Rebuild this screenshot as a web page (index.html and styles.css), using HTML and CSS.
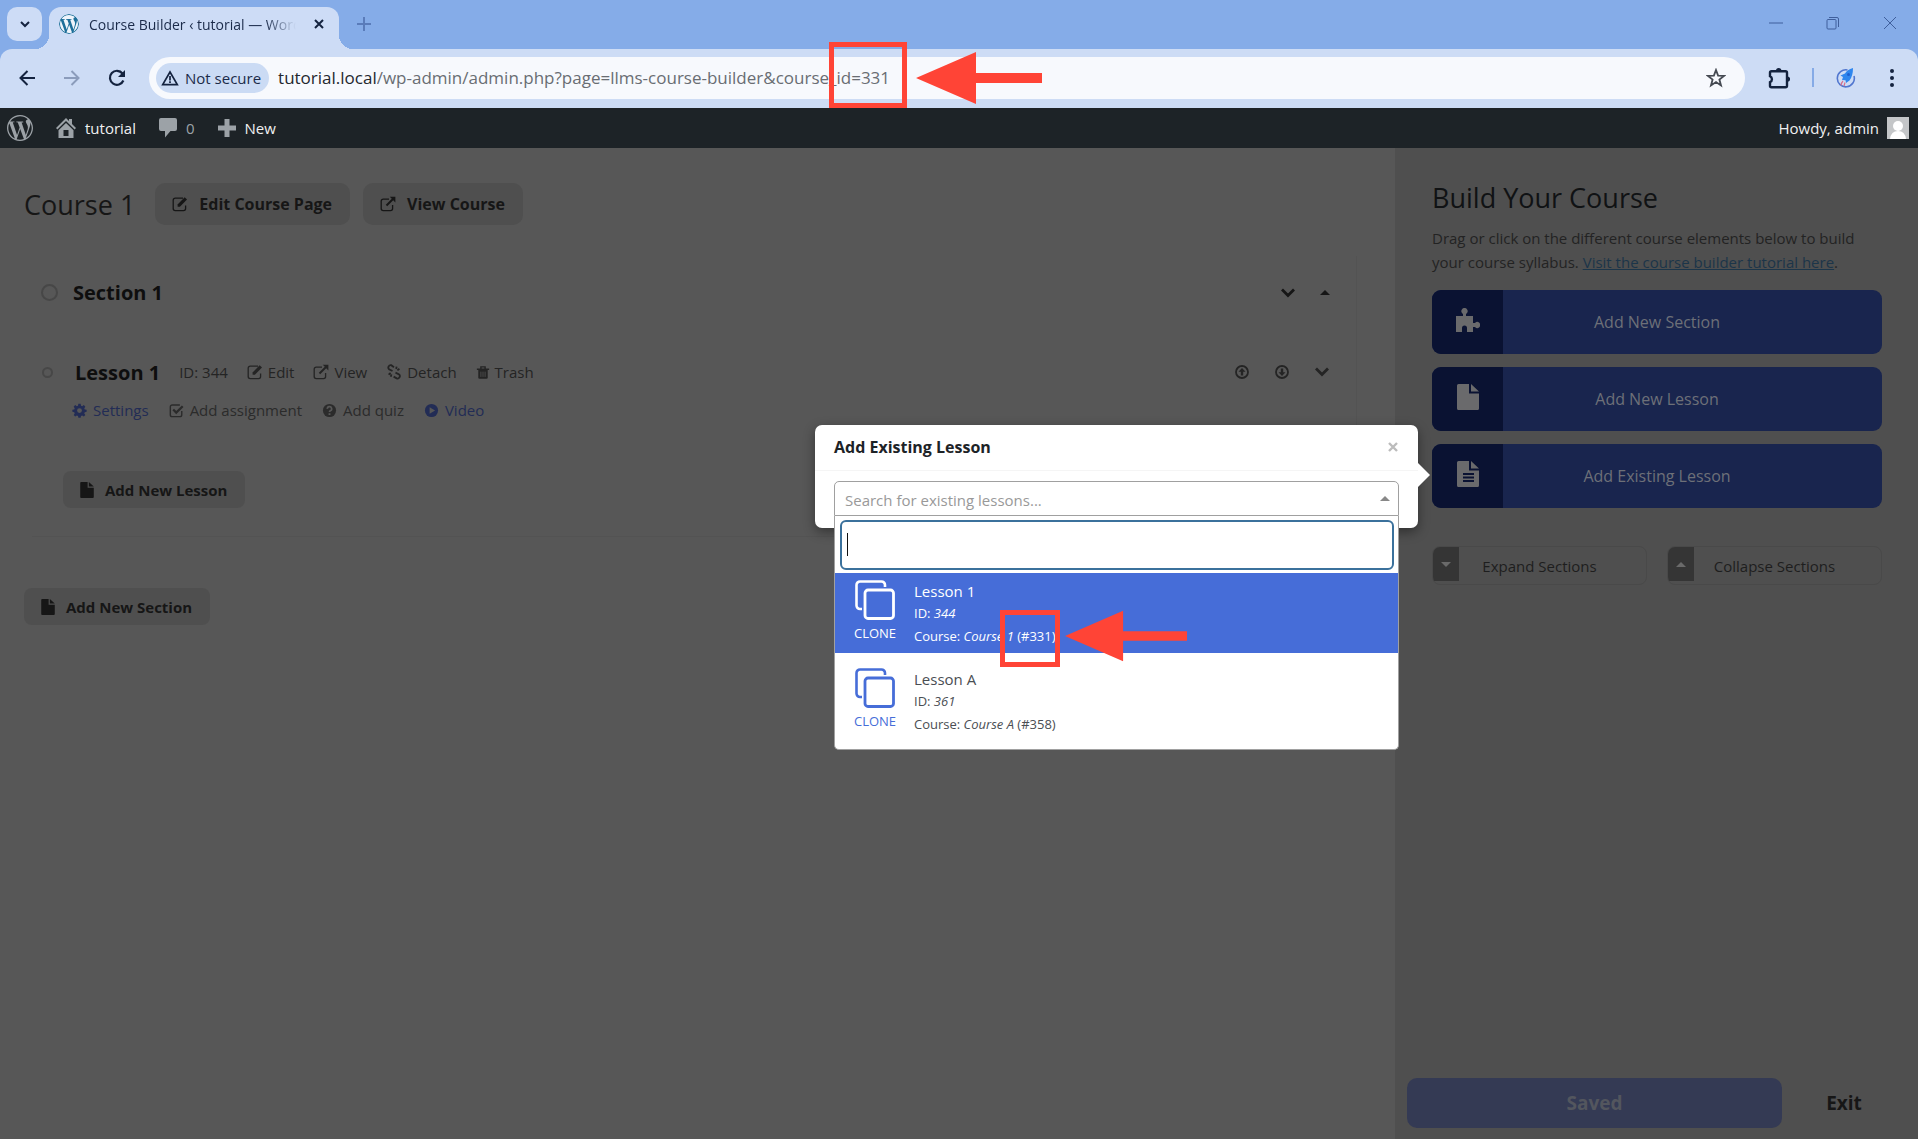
FILE: index.html
```
<!DOCTYPE html>
<html lang="en">
<head>
  <meta charset="UTF-8">
  <meta name="viewport" content="width=device-width, initial-scale=1.0">
  <title>Course Builder ‹ tutorial — WordPress</title>
  <link rel="stylesheet" href="styles.css">
</head>
<body>
  <!-- shared icons -->
  <svg class="sprite" aria-hidden="true">
    <symbol id="i-wp" viewBox="0 0 24 24"><path fill="currentColor" d="M21.469 6.825c.84 1.537 1.318 3.3 1.318 5.175 0 3.979-2.156 7.456-5.363 9.325l3.295-9.527c.615-1.54.82-2.771.82-3.864 0-.405-.026-.78-.07-1.11m-7.981.105c.647-.03 1.232-.105 1.232-.105.582-.075.514-.93-.067-.899 0 0-1.755.135-2.88.135-1.064 0-2.85-.15-2.85-.15-.585-.03-.661.855-.075.885 0 0 .54.061 1.125.09l1.68 4.605-2.37 7.08L5.354 6.9c.649-.03 1.234-.1 1.234-.1.585-.075.516-.93-.065-.896 0 0-1.746.138-2.874.138-.2 0-.438-.008-.69-.015C4.911 3.15 8.235 1.215 12 1.215c2.809 0 5.365 1.072 7.286 2.833-.046-.003-.091-.009-.141-.009-1.06 0-1.812.923-1.812 1.914 0 .89.513 1.643 1.06 2.531.411.72.89 1.643.89 2.977 0 .915-.354 1.994-.821 3.479l-1.075 3.585-3.9-11.61.001.014zM12 22.784c-1.059 0-2.081-.153-3.048-.437l3.237-9.406 3.315 9.087c.024.053.05.101.078.149-1.12.393-2.325.609-3.582.609M1.211 12c0-1.564.336-3.05.935-4.39L7.29 21.709C3.694 19.96 1.212 16.271 1.211 12M12 0C5.385 0 0 5.385 0 12s5.385 12 12 12 12-5.385 12-12S18.615 0 12 0"/></symbol>
    <symbol id="i-edit" viewBox="0 0 16 16"><path d="M11 2.2H3.2A2 2 0 0 0 1.2 4.2v8.4a2 2 0 0 0 2 2h8.4a2 2 0 0 0 2-2V9.5" fill="none" stroke="currentColor" stroke-width="1.3"/><path d="M5.6 8.4 12.7 1.3l2.3 2.3-7.1 7.1H5.6z" fill="currentColor"/></symbol>
    <symbol id="i-view" viewBox="0 0 16 16"><path d="M9 3.2H3.2a2 2 0 0 0-2 2v7.4a2 2 0 0 0 2 2h7.4a2 2 0 0 0 2-2V9" fill="none" stroke="currentColor" stroke-width="1.3"/><path d="M6.5 9.5 13 3" stroke="currentColor" stroke-width="2"/><path d="M9.8.8H15.4V6.4z" fill="currentColor"/></symbol>
    <symbol id="i-detach" viewBox="0 0 16 16"><path d="M6.5 7 3 5.2A2.4 2.4 0 0 1 5.2 1.2L8 3.2M9.5 8.6l3.6 1.8a2.4 2.4 0 0 1-2.4 4L7.6 12.6M2.6 10.6l2-1.6M4.8 12.8 5.4 10.4M13.4 4.8l-2 1.6M10.6 2.6 10.2 5" fill="none" stroke="currentColor" stroke-width="1.8"/></symbol>
    <symbol id="i-trash" viewBox="0 0 16 16"><path d="M2.6 5.2h10.8v8.600q0 1.400-1.400 1.400H4q-1.400 0-1.400-1.400z" fill="currentColor"/><path d="M1 4.200h14M5.600 3.600V1.600h4.800v2" fill="none" stroke="currentColor" stroke-width="1.600"/><path d="M5.600 7v6M8 7v6M10.400 7v6" stroke="#575757" stroke-width=".9"/></symbol>
    <symbol id="i-gear" viewBox="0 0 16 16"><path fill="currentColor" fill-rule="evenodd" d="M6.8.8h2.4l.4 2 1.3.6 1.7-1.2 1.6 1.7-1.1 1.7.5 1.3 2 .3v2.2l-2 .4-.5 1.3 1.1 1.7-1.6 1.6-1.7-1.1-1.3.5-.4 2H6.8l-.4-2-1.3-.5-1.7 1.1-1.6-1.6L2.900 11.100l-.5-1.300-2-.4V7.200l2-.3.5-1.300L1.800 3.900l1.600-1.700 1.700 1.200 1.300-.6zM8 5.500a2.600 2.600 0 1 0 0 5.200 2.600 2.600 0 0 0 0-5.200z"/></symbol>
    <symbol id="i-check" viewBox="0 0 16 16"><path d="M13.600 8.500v4a2 2 0 0 1-2 2H3.400a2 2 0 0 1-2-2V4.200a2 2 0 0 1 2-2h8.200" fill="none" stroke="currentColor" stroke-width="1.500"/><path d="m4.500 7 3.200 3.200L14.600 3.400" fill="none" stroke="currentColor" stroke-width="2.400"/></symbol>
    <symbol id="i-help" viewBox="0 0 16 16"><circle cx="8" cy="8" r="7" fill="currentColor"/><path d="M5.700 6.300A2.300 2.300 0 1 1 8.900 8.300Q8 8.800 8 9.700" fill="none" stroke="#575757" stroke-width="1.800"/><path d="M7 10.900h2v1.900H7z" fill="#575757"/></symbol>
    <symbol id="i-play" viewBox="0 0 16 16"><circle cx="8" cy="8" r="7" fill="currentColor"/><path d="M6 4.500v7L11.800 8z" fill="#575757"/></symbol>
    <symbol id="i-file" viewBox="0 0 22 26"><path fill="currentColor" d="M0 1.500Q0 0 1.500 0H12v9.500h10v15q0 1.500-1.500 1.500h-19Q0 26 0 24.500zM14 0l8 7.500h-8z"/></symbol>
    <symbol id="i-down" viewBox="0 0 16 16"><path d="m2 4.500 6 6 6-6" fill="none" stroke="currentColor" stroke-width="2.800"/></symbol>
    <symbol id="i-circle-up" viewBox="0 0 16 16"><circle cx="8" cy="8" r="6" fill="none" stroke="currentColor" stroke-width="1.800"/><path d="M8 4 11.500 7.800H9.200v3.800H6.800V7.800H4.500z" fill="currentColor"/></symbol>
    <symbol id="i-clone" viewBox="0 0 40 40"><path d="M7 29H5a3.500 3.500 0 0 1-3.500-3.500V5A3.500 3.500 0 0 1 5 1.500h21.500A3.500 3.500 0 0 1 30 5v2" fill="none" stroke="currentColor" stroke-width="2.600"/><rect x="10" y="10" width="28.500" height="28.500" rx="3" fill="none" stroke="currentColor" stroke-width="2.800"/></symbol>
    <symbol id="i-arrow" viewBox="0 0 126 52"><path fill="#ff4436" d="M0 26 60 0v21h66v10H60v21z"/></symbol>
  </svg>

  <header class="browser">
    <div class="tab-strip">
      <button class="tab-search" aria-label="Search tabs"><svg width="12" height="12" viewBox="0 0 12 12"><path d="m2 4 4 4 4-4" fill="none" stroke="#15233f" stroke-width="2"/></svg></button>
      <div class="tab">
        <svg class="favicon" width="20" height="20"><use href="#i-wp"/></svg>
        <span class="tab-title">Course Builder ‹ tutorial — WordPress</span>
        <button class="tab-close" aria-label="Close tab"><svg width="10" height="10" viewBox="0 0 10 10"><path d="m1 1 8 8M9 1 1 9" stroke="#14233f" stroke-width="2"/></svg></button>
      </div>
      <button class="tab-new" aria-label="New tab"><svg width="14" height="14" viewBox="0 0 14 14"><path d="M7 0v14M0 7h14" stroke="#5a7cba" stroke-width="2"/></svg></button>
      <div class="window-controls">
        <button aria-label="Minimize"><svg width="14" height="14" viewBox="0 0 14 14"><path d="M0 7h14" stroke="#3f5f9c"/></svg></button>
        <button aria-label="Restore"><svg width="14" height="14" viewBox="0 0 14 14"><path d="M3 1.500h8A1.500 1.500 0 0 1 12.500 3v8M2 3.500h7a1 1 0 0 1 1 1V12a1 1 0 0 1-1 1H2a1 1 0 0 1-1-1V4.500a1 1 0 0 1 1-1z" fill="none" stroke="#3f5f9c"/></svg></button>
        <button aria-label="Close"><svg width="14" height="14" viewBox="0 0 14 14"><path d="m1 1 12 12M13 1 1 13" stroke="#3f5f9c"/></svg></button>
      </div>
    </div>

    <div class="toolbar">
      <div class="nav-buttons">
        <button aria-label="Back"><svg width="18" height="18" viewBox="0 0 18 18"><path d="M17 9H3M9.500 2 2.500 9l7 7" fill="none" stroke="#14233f" stroke-width="2"/></svg></button>
        <button aria-label="Forward"><svg width="18" height="18" viewBox="0 0 18 18"><path d="M1 9h14M8.500 2l7 7-7 7" fill="none" stroke="#8b9cbb" stroke-width="2"/></svg></button>
        <button aria-label="Reload"><svg width="18" height="18" viewBox="0 0 18 18"><path d="M15.400 11.500A7 7 0 1 1 14.500 4.500" fill="none" stroke="#14233f" stroke-width="2.200"/><path d="M17 1v7h-7z" fill="#14233f"/></svg></button>
      </div>
      <div class="omnibox">
        <button class="chip"><svg width="18" height="16" viewBox="0 0 18 16"><path d="M9 2 16.300 14.600H1.700z" fill="none" stroke="#14233f" stroke-width="1.700"/><path d="M9 6v4.500M9 11.300v1.600" stroke="#14233f" stroke-width="1.700"/></svg>Not secure</button>
        <label class="host" for="url">tutorial.local</label>
        <input id="url" class="url" type="text" value="/wp-admin/admin.php?page=llms-course-builder&amp;course_id=331">
        <button class="star" aria-label="Bookmark"><svg width="20" height="20" viewBox="0 0 20 20"><path d="m10 2 2.100 5.600 6 .3-4.700 3.700 1.600 5.800-5-3.300-5 3.300 1.600-5.800L1.900 7.900l6-.3z" fill="none" stroke="#454a52" stroke-width="1.800"/></svg></button>
        <span class="mark mark-url"></span>
        <svg class="arrow arrow-url"><use href="#i-arrow"/></svg>
      </div>
      <div class="extensions">
        <button aria-label="Extensions"><svg width="22" height="22" viewBox="0 0 22 22"><path d="M3.500 4.200h14q1.500 0 1.500 1.500v13q0 1.500-1.500 1.500h-14Q2 20.200 2 18.700v-3.500a3.300 3.300 0 0 0 0-6V5.700q0-1.500 1.500-1.500z" fill="none" stroke="#14233f" stroke-width="2.400"/><path d="M8 3.600a2.700 2.700 0 0 1 5.400 0zM19.500 9.500a2.600 2.600 0 0 1 0 5.200z" fill="#14233f"/></svg></button>
        <span class="divider"></span>
        <button aria-label="Profile"><svg width="20" height="20" viewBox="0 0 20 20"><path d="M11.500 2A8.500 8.500 0 1 0 18 8" fill="none" stroke="#5076cf" stroke-width="1.600"/><path d="M17 0Q11 1.500 9 5.500L4.500 7.500l2.500 1.500L6 12l3.500.2.500 2.800 3.500-2.500Q17 8 17 0z" fill="#2e86ee"/><circle cx="12.500" cy="6.500" r="1.500" fill="#1c5fd0"/><path d="M5 17.500q.5-3 2-4.500M8 18l1-3.500" stroke="#d7708b" stroke-width="1.200" fill="none"/></svg></button>
        <button aria-label="Menu"><svg width="4" height="18" viewBox="0 0 4 18"><circle cx="2" cy="2" r="2" fill="#14233f"/><circle cx="2" cy="9" r="2" fill="#14233f"/><circle cx="2" cy="16" r="2" fill="#14233f"/></svg></button>
      </div>
    </div>
  </header>

  <nav class="admin-bar">
    <a href="#" aria-label="About WordPress"><svg width="26" height="26"><use href="#i-wp"/></svg></a>
    <a href="#"><svg width="20" height="20" viewBox="0 0 20 20"><path d="m10 0 3 3V1h3v5l4 4-1.400 1.400L10 3 1.400 11.400 0 10z" fill="currentColor"/><path d="M2.500 12.300 10 5l7.500 7.300V20h-15zM7.500 12v6h5v-6z" fill="currentColor" fill-rule="evenodd"/></svg><span>tutorial</span></a>
    <a href="#" class="muted"><svg width="18" height="20" viewBox="0 0 18 20"><path d="M2 0h14q2 0 2 2v9q0 2-2 2h-4.500L6 19.500V13H2q-2 0-2-2V2q0-2 2-2z" fill="currentColor"/></svg><span>0</span></a>
    <a href="#"><svg width="18" height="18" viewBox="0 0 18 18"><path d="M6.500 0h5v6.500H18v5h-6.500V18h-5v-6.500H0v-5h6.500z" fill="currentColor"/></svg><span>New</span></a>
    <a href="#" class="account"><span>Howdy, admin</span><svg width="22" height="22" viewBox="0 0 22 22"><path d="M0 0h22v22H0z" fill="#c4c6c8"/><circle cx="11" cy="9" r="5" fill="#fff"/><path d="M3 22q1-8 8-8t8 8z" fill="#fff"/></svg></a>
  </nav>

  <div class="builder">
    <main class="course">
      <div class="course-head">
        <h1>Course 1</h1>
        <button class="btn btn-tall"><svg width="16" height="16"><use href="#i-edit"/></svg>Edit Course Page</button>
        <button class="btn btn-tall"><svg width="16" height="16"><use href="#i-view"/></svg>View Course</button>
      </div>

      <section class="section">
        <div class="section-head">
          <span class="dot"></span>
          <h2>Section 1</h2>
          <div class="row-tools">
            <button aria-label="Move section down"><svg width="16" height="16"><use href="#i-down"/></svg></button>
            <button aria-label="Collapse section"><span class="caret-up"></span></button>
          </div>
        </div>

        <article class="lesson">
          <div class="lesson-head">
            <span class="dot dot-small"></span>
            <h3>Lesson 1</h3>
            <span class="lesson-id">ID: 344</span>
            <a href="#"><svg width="16" height="16"><use href="#i-edit"/></svg>Edit</a>
            <a href="#"><svg width="16" height="16"><use href="#i-view"/></svg>View</a>
            <a href="#"><svg width="16" height="16"><use href="#i-detach"/></svg>Detach</a>
            <a href="#"><svg width="14" height="15"><use href="#i-trash"/></svg>Trash</a>
            <div class="row-tools">
              <button aria-label="Move lesson up"><svg width="16" height="16"><use href="#i-circle-up"/></svg></button>
              <button aria-label="Move lesson down"><svg class="flip" width="16" height="16"><use href="#i-circle-up"/></svg></button>
              <button aria-label="Expand lesson"><svg width="16" height="16"><use href="#i-down"/></svg></button>
            </div>
          </div>
          <div class="lesson-links">
            <a href="#" class="on"><svg width="15" height="15"><use href="#i-gear"/></svg>Settings</a>
            <a href="#"><svg width="15" height="15"><use href="#i-check"/></svg>Add assignment</a>
            <a href="#"><svg width="15" height="15"><use href="#i-help"/></svg>Add quiz</a>
            <a href="#" class="on"><svg width="15" height="15"><use href="#i-play"/></svg>Video</a>
          </div>
        </article>

        <button class="btn btn-lesson"><svg width="14" height="16"><use href="#i-file"/></svg>Add New Lesson</button>
      </section>

      <button class="btn"><svg width="14" height="16"><use href="#i-file"/></svg>Add New Section</button>
    </main>

    <aside class="sidebar">
      <h2>Build Your Course</h2>
      <p>Drag or click on the different course elements below to build your course syllabus. <a href="#">Visit the course builder tutorial here</a>.</p>

      <div class="elements">
        <button class="element"><span class="element-icon"><svg width="24" height="24" viewBox="0 0 24 24"><path fill="currentColor" d="M0 8h7V6a3.200 3.200 0 1 1 3 0v2h7v7h2a3 3 0 1 1 0 4h-2v5h-6v-4a2.500 2.500 0 1 0-5 0v4H0z"/></svg></span>Add New Section</button>
        <button class="element"><span class="element-icon"><svg width="22" height="26"><use href="#i-file"/></svg></span>Add New Lesson</button>
        <div class="element-wrap">
          <button class="element"><span class="element-icon"><svg width="22" height="26" viewBox="0 0 22 26"><use href="#i-file"/><path d="M6 13h11M6 16.500h11M6 20h11" stroke="#0a1232" stroke-width="1.800"/></svg></span>Add Existing Lesson</button>

          <div class="popover">
            <div class="popover-head">
              <strong>Add Existing Lesson</strong>
              <button aria-label="Close"><svg width="10" height="10" viewBox="0 0 10 10"><path d="m1 1 8 8M9 1 1 9" stroke="#bcbcbc" stroke-width="2.400"/></svg></button>
            </div>
            <div class="popover-body">
              <div class="select-wrap">
                <select class="lesson-select" aria-label="Existing lesson">
                  <option>Search for existing lessons...</option>
                </select>
                <span class="caret-up"></span>
              </div>
              <div class="dropdown">
                <div class="search"><input type="text" aria-label="Search lessons"></div>
                <ul>
                  <li class="active">
                    <div class="clone"><svg width="40" height="40"><use href="#i-clone"/></svg>CLONE</div>
                    <div class="info"><b>Lesson 1</b><span>ID: <em>344</em></span><span>Course: <em>Course 1</em> (#331)</span></div>
                    <span class="mark mark-id"></span>
                    <svg class="arrow arrow-id"><use href="#i-arrow"/></svg>
                  </li>
                  <li>
                    <div class="clone"><svg width="40" height="40"><use href="#i-clone"/></svg>CLONE</div>
                    <div class="info"><b>Lesson A</b><span>ID: <em>361</em></span><span>Course: <em>Course A</em> (#358)</span></div>
                  </li>
                </ul>
              </div>
            </div>
          </div>
        </div>
      </div>

      <div class="toggles">
        <button><span class="toggle-icon"><i class="caret-down"></i></span><span class="toggle-text">Expand Sections</span></button>
        <button><span class="toggle-icon"><i class="caret-up"></i></span><span class="toggle-text">Collapse Sections</span></button>
      </div>

      <div class="actions">
        <button class="saved" disabled>Saved</button>
        <button class="exit">Exit</button>
      </div>
    </aside>
  </div>
</body>
</html>
```
FILE: styles.css
```
* {
  box-sizing: border-box;
}
body {
  margin: 0;
  min-height: 100vh;
  display: flex;
  flex-direction: column;
  font-family: "Open Sans", "Noto Sans", sans-serif;
  font-size: 15px;
  background-color: #575757;
  color: #161616;
}
button {
  font: inherit;
  color: inherit;
  border: none;
  background: none;
  padding: 0;
  cursor: pointer;
}
h1, h2, h3, p, ul {
  margin: 0;
  padding: 0;
}
a {
  color: inherit;
  text-decoration: none;
}
svg {
  display: block;
  flex: none;
}
.sprite {
  position: absolute;
  width: 0;
  height: 0;
}

/* browser window */
.browser {
  background-color: #85ace8;
}
.tab-strip {
  display: flex;
  height: 49px;
  padding: 7px 0 0 7px;
}
.tab-search {
  display: grid;
  place-items: center;
  width: 35px;
  height: 34px;
  border-radius: 10px;
  background-color: #cddcf6;
}
.tab {
  position: relative;
  display: flex;
  align-items: center;
  width: 290px;
  margin-left: 7px;
  padding: 0 15px 8px 10px;
  border-radius: 12px 12px 0 0;
  background-color: #cddcf6;
  color: #1b2b4a;
}
.tab::before,
.tab::after {
  content: "";
  position: absolute;
  bottom: 0;
  width: 14px;
  height: 14px;
}
.tab::before {
  right: 100%;
  background: radial-gradient(circle at 0 0, transparent 14px, #cddcf6 14px);
}
.tab::after {
  left: 100%;
  background: radial-gradient(circle at 100% 0, transparent 14px, #cddcf6 14px);
}
.favicon {
  color: #1d6f9a;
  background-color: #eef4fb;
  border-radius: 50%;
}
.tab-title {
  flex: 1;
  margin-left: 10px;
  font-size: 14px;
  white-space: nowrap;
  overflow: hidden;
  -webkit-mask-image: linear-gradient(to right, #000 85%, transparent);
  mask-image: linear-gradient(to right, #000 85%, transparent);
}
.tab-close {
  margin-left: 18px;
}
.tab-new {
  margin-left: 18px;
  padding-bottom: 8px;
}
.window-controls {
  display: flex;
  gap: 43px;
  margin-left: auto;
  padding: 0 21px 10px 0;
}
.toolbar {
  display: flex;
  align-items: center;
  height: 59px;
  padding-bottom: 2px;
  border-radius: 12px 12px 0 0;
  background-color: #cddcf5;
}
.nav-buttons {
  display: flex;
  gap: 27px;
  padding: 0 23px 0 18px;
}
.omnibox {
  position: relative;
  flex: 1;
  display: flex;
  align-items: center;
  height: 42px;
  padding: 0 19px 0 7px;
  border-radius: 21px;
  background-color: #f7f9fd;
  font-size: 17px;
}
.chip {
  display: flex;
  align-items: center;
  gap: 6px;
  height: 30px;
  padding: 0 8px 0 5px;
  border-radius: 15px;
  background-color: #cbdbf4;
  color: #1b2b4a;
  font-size: 15px;
}
.host {
  margin-left: 9px;
  color: #23272e;
}
.url {
  flex: 1;
  min-width: 0;
  padding: 0;
  border: none;
  outline: none;
  background: none;
  font: inherit;
  color: #696d73;
}
.extensions {
  display: flex;
  align-items: center;
  gap: 22px;
  padding: 0 24px 0 23px;
}
.divider {
  width: 2px;
  height: 19px;
  background-color: #86abe6;
}
.extensions button:last-child {
  padding-left: 12px;
}

/* annotation marks */
.mark {
  position: absolute;
  border: 5px solid #ff4436;
}
.mark-url {
  left: 680px;
  top: -15px;
  width: 78px;
  height: 66px;
}
.arrow {
  position: absolute;
  width: 126px;
  height: 52px;
}
.arrow-url {
  left: 767px;
  top: -5px;
}
.mark-id {
  left: 165px;
  top: 37px;
  width: 60px;
  height: 57px;
}
.arrow-id {
  left: 230px;
  top: 37px;
  width: 122px;
}

/* WordPress admin bar */
.admin-bar {
  display: flex;
  align-items: center;
  gap: 23px;
  height: 40px;
  padding: 0 9px 0 7px;
  background-color: #1d2327;
  color: #f0f0f1;
}
.admin-bar a {
  display: flex;
  align-items: center;
  gap: 9px;
}
.admin-bar svg,
.admin-bar .muted {
  color: #9ca2a7;
}
.admin-bar .account {
  gap: 8px;
  margin-left: auto;
}

/* course builder */
.builder {
  flex: 1;
  display: flex;
}
.course {
  flex: 1;
  padding: 35px 38px 0 24px;
}
.course-head {
  display: flex;
  align-items: center;
  gap: 13px;
}
.course-head h1 {
  margin-right: 7px;
  font-size: 27px;
  font-weight: 400;
}
.btn {
  display: flex;
  align-items: center;
  gap: 11px;
  height: 37px;
  padding: 0 18px 0 17px;
  border-radius: 8px;
  background-color: #4f4f4f;
  font-size: 15px;
  font-weight: 700;
}
.btn-tall {
  height: 42px;
  border-radius: 10px;
  font-size: 16px;
}
.section {
  margin: 31px 0 51px 8px;
  padding-bottom: 28px;
  border: solid #535353;
  border-width: 0 1px 1px 0;
}
.section-head,
.lesson-head,
.lesson-links {
  display: flex;
  align-items: center;
}
.section-head {
  height: 73px;
  padding: 0 26px 0 9px;
}
.section-head h2,
.lesson-head h3 {
  font-size: 20px;
  font-weight: 700;
  color: #0e0e0e;
}
.dot {
  width: 17px;
  height: 17px;
  margin-right: 15px;
  border: 2px solid #474747;
  border-radius: 50%;
}
.dot-small {
  width: 11px;
  height: 11px;
  margin-right: 22px;
}
.row-tools {
  display: flex;
  align-items: center;
  gap: 24px;
  margin-left: auto;
}
.caret-up,
.caret-down {
  display: block;
  border: 5px solid transparent;
}
.caret-up {
  border-top: 0;
  border-bottom-color: currentColor;
}
.caret-down {
  border-bottom: 0;
  border-top-color: currentColor;
}
.flip {
  transform: rotate(180deg);
}
.lesson {
  padding: 25px 26px 0 10px;
}
.lesson-head {
  height: 36px;
  color: #242424;
}
.lesson-head a,
.lesson-links a {
  display: flex;
  align-items: center;
  gap: 5px;
}
.lesson-id {
  margin-left: 19px;
}
.lesson-head a {
  margin-left: 19px;
}
.lesson-links {
  gap: 20px;
  height: 40px;
  padding-left: 30px;
  color: #2b2b2b;
}
.lesson-links a {
  gap: 6px;
}
.lesson-links .on {
  color: #222c55;
}
.btn-lesson {
  margin: 41px 0 0 31px;
}

/* sidebar */
.sidebar {
  display: flex;
  flex-direction: column;
  width: 523px;
  padding: 31px 36px 11px 37px;
  background-color: #4f4f4f;
}
.sidebar h2 {
  font-size: 27px;
  font-weight: 500;
  line-height: 38px;
  color: #101214;
}
.sidebar p {
  margin: 9px 0 16px;
  line-height: 24px;
  color: #232323;
}
.sidebar p a {
  color: #1c3549;
  text-decoration: underline;
}
.elements {
  display: grid;
  gap: 13px;
}
.element-wrap {
  position: relative;
}
.element {
  position: relative;
  width: 100%;
  height: 64px;
  border-radius: 9px;
  background-color: #19254e;
  color: #6d7078;
  font-size: 16px;
  overflow: hidden;
}
.element-icon {
  position: absolute;
  inset: 0 auto 0 0;
  display: grid;
  place-items: center;
  width: 71px;
  padding-bottom: 4px;
  background-color: #0a1232;
  color: #6a6a6c;
}
.toggles {
  display: grid;
  grid-template-columns: 1fr 1fr;
  gap: 20px;
  margin-top: 38px;
}
.toggles button {
  display: flex;
  height: 39px;
  border: 1px solid #494949;
  border-radius: 8px;
  overflow: hidden;
  color: #1e1e1e;
}
.toggle-icon {
  display: grid;
  place-items: center;
  width: 26px;
  height: 34px;
  background-color: #353535;
  color: #6a6a6a;
}
.toggle-text {
  flex: 1;
  align-self: center;
  padding-right: 26px;
}
.actions {
  display: flex;
  gap: 12px;
  margin: auto -12px 0 -25px;
}
.actions button {
  height: 50px;
  font-size: 19px;
  font-weight: 700;
}
.saved {
  width: 375px;
  border-radius: 10px;
  background-color: #343a54;
  color: #53565e;
}
.exit {
  flex: 1;
}

/* add existing lesson popover */
.popover {
  position: absolute;
  right: calc(100% + 14px);
  top: -19px;
  width: 603px;
  border-radius: 7px;
  background-color: #fff;
  color: #1d2327;
  box-shadow: 0 4px 12px rgba(0, 0, 0, 0.4);
}
.popover::after {
  content: "";
  position: absolute;
  left: 100%;
  top: 38px;
  border: 12px solid transparent;
  border-left-color: #fff;
  border-right: 0;
}
.popover-head {
  display: flex;
  align-items: center;
  justify-content: space-between;
  height: 46px;
  padding: 0 20px 2px 19px;
  border-bottom: 1px solid #f5f5f5;
  font-size: 16px;
}
.popover-body {
  padding: 10px 19px 12px;
}
.select-wrap {
  position: relative;
}
.lesson-select {
  display: block;
  appearance: none;
  width: 100%;
  height: 35px;
  padding: 2px 10px 0;
  border: 1px solid #a0a0a0;
  border-radius: 5px 5px 0 0;
  background-color: #fff;
  color: #999;
  font: inherit;
}
.select-wrap .caret-up {
  position: absolute;
  right: 9px;
  top: 15px;
  color: #888;
}
.dropdown {
  position: absolute;
  left: 19px;
  right: 19px;
  border: 1px solid #a0a0a0;
  border-top: 0;
  border-radius: 0 0 5px 5px;
  background-color: #fff;
}
.search {
  position: relative;
  padding: 4px 4px 3px 5px;
}
.search input {
  display: block;
  width: 100%;
  height: 50px;
  padding: 0 8px;
  border: 2px solid #3b719c;
  border-radius: 6px;
  outline: none;
  font: inherit;
}
/* text cursor */
.search::after {
  content: "";
  position: absolute;
  left: 12px;
  top: 17px;
  width: 1px;
  height: 23px;
  background-color: #111;
}
.dropdown ul {
  list-style: none;
}
.dropdown li {
  position: relative;
  display: flex;
  gap: 18px;
  padding: 7px 19px 6px;
  height: 80px;
  color: #4a4e53;
}
.dropdown li + li {
  margin: 8px 0;
}
.dropdown .active {
  background-color: #466dd8;
  color: #fff;
}
.clone {
  display: flex;
  flex-direction: column;
  align-items: center;
  gap: 4px;
  width: 42px;
  font-size: 13px;
  line-height: 18px;
  color: #466dd8;
}
.active .clone {
  color: #fff;
}
.info {
  display: flex;
  flex-direction: column;
  font-size: 13px;
  line-height: 23px;
}
.info b {
  font-size: 15px;
  font-weight: 400;
  line-height: 22px;
}
```
